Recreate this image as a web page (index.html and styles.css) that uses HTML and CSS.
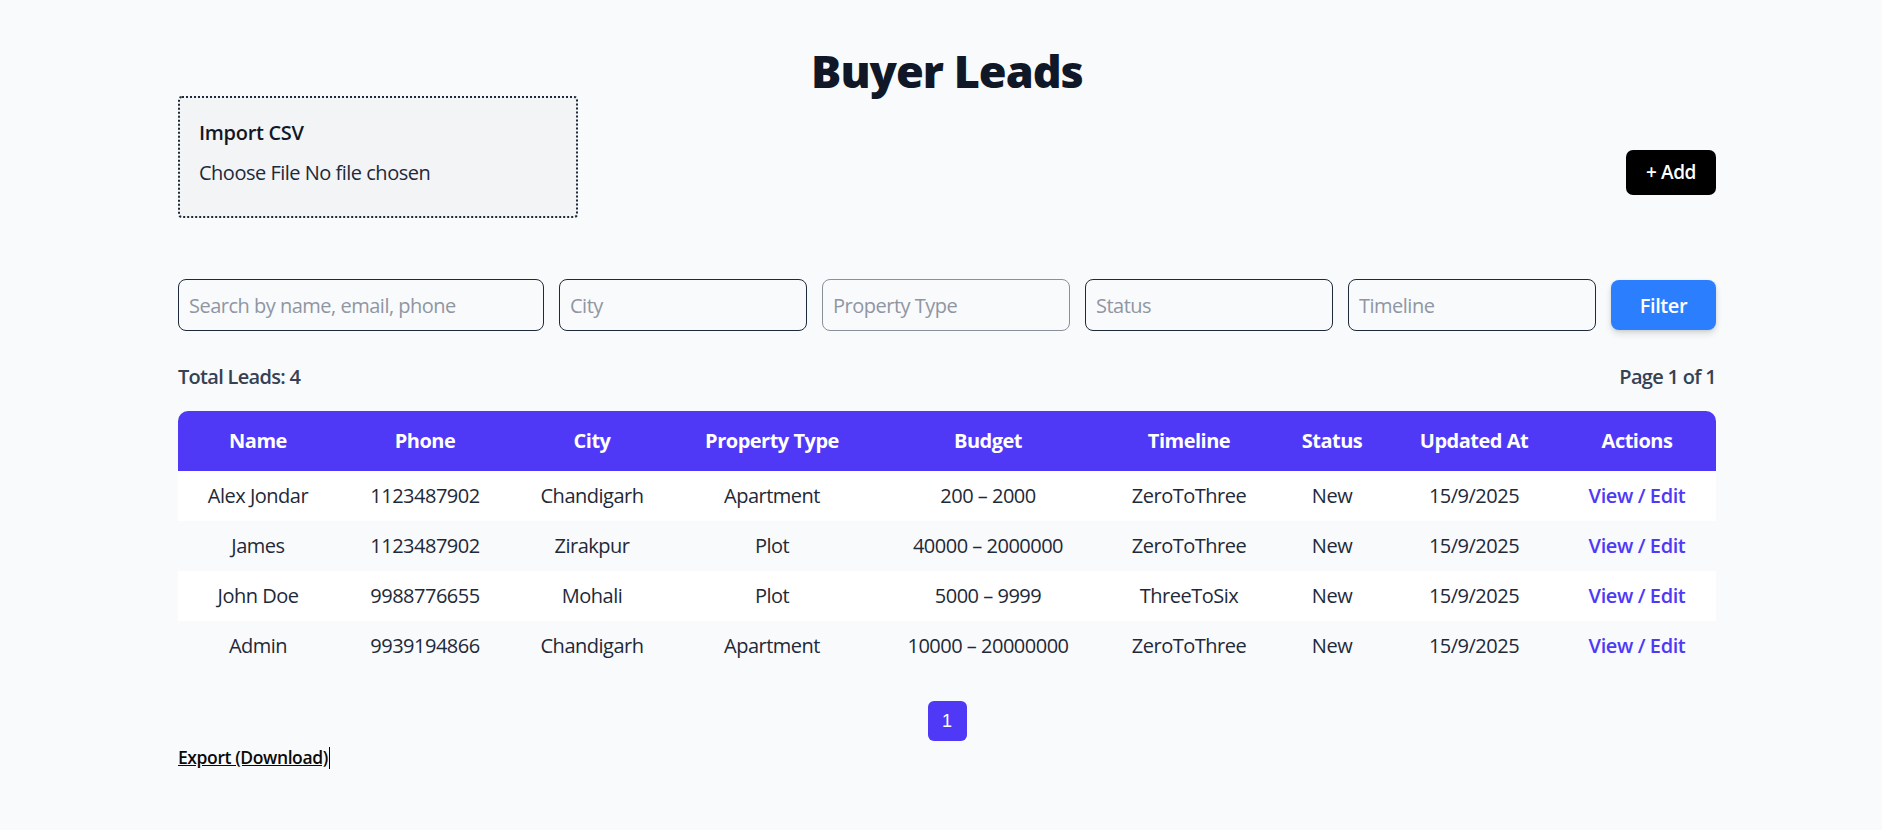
FILE: index.html
```html
<!DOCTYPE html>
<html lang="en">
<head>
<meta charset="utf-8">
<title>Buyer Leads</title>
<link rel="stylesheet" href="styles.css">
</head>
<body>
<main class="page">
  <h1 class="title">Buyer Leads</h1>

  <div class="top-row">
    <section class="import-box">
      <h2 class="import-title">Import CSV</h2>
      <div class="file-input"><span class="file-btn">Choose File</span> <span class="file-name">No file chosen</span></div>
    </section>
    <button class="add-btn">+ Add</button>
  </div>

  <form class="filters">
    <input class="field field-search" type="text" placeholder="Search by name, email, phone">
    <input class="field" type="text" placeholder="City">
    <input class="field field-light" type="text" placeholder="Property Type">
    <input class="field" type="text" placeholder="Status">
    <input class="field" type="text" placeholder="Timeline">
    <button class="filter-btn" type="button">Filter</button>
  </form>

  <div class="stats">
    <span>Total Leads: 4</span>
    <span>Page 1 of 1</span>
  </div>

  <table class="leads">
    <colgroup>
      <col class="c-name"><col class="c-phone"><col class="c-city"><col class="c-type"><col class="c-budget"><col class="c-timeline"><col class="c-status"><col class="c-updated"><col class="c-actions">
    </colgroup>
    <thead>
      <tr>
        <th class="th-first">Name</th><th>Phone</th><th>City</th><th>Property Type</th><th>Budget</th><th>Timeline</th><th>Status</th><th>Updated At</th><th class="th-last">Actions</th>
      </tr>
    </thead>
    <tbody>
      <tr class="row-white">
        <td>Alex Jondar</td><td>1123487902</td><td>Chandigarh</td><td>Apartment</td><td>200 – 2000</td><td>ZeroToThree</td><td>New</td><td>15/9/2025</td><td><a class="action" href="#">View / Edit</a></td>
      </tr>
      <tr class="row-gray">
        <td>James</td><td>1123487902</td><td>Zirakpur</td><td>Plot</td><td>40000 – 2000000</td><td>ZeroToThree</td><td>New</td><td>15/9/2025</td><td><a class="action" href="#">View / Edit</a></td>
      </tr>
      <tr class="row-white">
        <td>John Doe</td><td>9988776655</td><td>Mohali</td><td>Plot</td><td>5000 – 9999</td><td>ThreeToSix</td><td>New</td><td>15/9/2025</td><td><a class="action" href="#">View / Edit</a></td>
      </tr>
      <tr class="row-gray">
        <td>Admin</td><td>9939194866</td><td>Chandigarh</td><td>Apartment</td><td>10000 – 20000000</td><td>ZeroToThree</td><td>New</td><td>15/9/2025</td><td><a class="action" href="#">View / Edit</a></td>
      </tr>
    </tbody>
  </table>

  <nav class="pager">
    <button class="page-btn">1</button>
  </nav>

  <div class="export-row">
    <a class="export" href="#">Export (Download)</a><span class="caret"></span>
  </div>
</main>
</body>
</html>
```

FILE: styles.css
```css
* { box-sizing: border-box; }

html, body {
  margin: 0;
  padding: 0;
  background: #f9fafb;
}

body {
  font-family: "Open Sans", "Noto Sans", sans-serif;
  font-size: 20px;
  line-height: 30px;
  color: #1e2939;
  letter-spacing: -0.5px;
}

.page {
  width: 1538px;
  margin-left: 178px;
  padding-top: 46px;
  padding-bottom: 40px;
}

.title {
  margin: 0;
  text-align: center;
  font-size: 45px;
  line-height: 50px;
  font-weight: 800;
  color: #101828;
  letter-spacing: -1px;
}

.top-row {
  display: flex;
  justify-content: space-between;
  align-items: center;
}

.import-box {
  width: 400px;
  margin-bottom: 30px;
  padding: 20px 20px 28px 19px;
  background: #f3f4f6;
  border: 2px dotted #1e2939;
  border-radius: 4px;
}

.import-title {
  margin: 0 0 10px 0;
  font-size: 20px;
  line-height: 30px;
  font-weight: 600;
  color: #101828;
  letter-spacing: -0.3px;
}

.file-input {
  font-size: 20px;
  line-height: 30px;
  color: #1e2939;
}

.add-btn {
  height: 45px;
  padding: 0 20px;
  border: none;
  border-radius: 7px;
  background: #000;
  color: #fff;
  font-family: inherit;
  font-size: 19px;
  font-weight: 600;
  letter-spacing: -0.4px;
  cursor: pointer;
}

.filters {
  display: flex;
  gap: 15px;
  margin: 31px 0 0 0;
  align-items: center;
}

.field {
  width: 248px;
  height: 52px;
  padding: 0 10px;
  border: 1px solid #1e2939;
  border-radius: 8px;
  background: #f9fafb;
  font-family: inherit;
  font-size: 20px;
  letter-spacing: -0.5px;
  color: #1e2939;
  outline: none;
}

.field::placeholder { color: #8f96a3; }

.field-search { flex: 1; }

.field-light { border-color: #8a909a; }

.filter-btn {
  width: 105px;
  height: 50px;
  border: none;
  border-radius: 8px;
  background: #2b7fff;
  color: #fff;
  font-family: inherit;
  font-size: 20px;
  font-weight: 600;
  letter-spacing: -0.4px;
  box-shadow: 0 4px 7px rgba(0, 0, 0, 0.12), 0 1px 3px rgba(0, 0, 0, 0.1);
  cursor: pointer;
}

.stats {
  display: flex;
  justify-content: space-between;
  margin-top: 31px;
  font-weight: 600;
  color: #364153;
  letter-spacing: -0.7px;
}

.leads {
  width: 100%;
  margin-top: 19px;
  border-collapse: separate;
  border-spacing: 0;
  table-layout: fixed;
}

.c-name { width: 160px; }
.c-phone { width: 174px; }
.c-city { width: 160px; }
.c-type { width: 200px; }
.c-budget { width: 232px; }
.c-timeline { width: 170px; }
.c-status { width: 116px; }
.c-updated { width: 168px; }
.c-actions { width: 158px; }

.leads th {
  padding: 15px 0;
  background: #4f39f6;
  color: #fff;
  font-weight: 700;
  text-align: center;
  line-height: 30px;
  letter-spacing: -0.5px;
}

.leads .th-first { border-top-left-radius: 10px; }
.leads .th-last { border-top-right-radius: 10px; }

.leads td {
  padding: 10px 0;
  text-align: center;
  line-height: 30px;
  white-space: nowrap;
}

.row-white td { background: #ffffff; }
.row-gray td { background: #f9fafb; }

.action {
  color: #4f39f6;
  font-weight: 600;
  text-decoration: none;
  letter-spacing: -0.4px;
}

.pager {
  display: flex;
  justify-content: center;
  margin-top: 30px;
}

.page-btn {
  width: 39px;
  height: 40px;
  padding: 0;
  border: none;
  border-radius: 6px;
  background: #4f39f6;
  color: #fff;
  font-family: "Liberation Sans", Arial, sans-serif;
  font-size: 18px;
  letter-spacing: 0;
}

.export-row {
  display: flex;
  align-items: center;
  margin-top: 4px;
  height: 25px;
}

.export {
  font-size: 17.5px;
  line-height: 25px;
  font-weight: 600;
  color: #0a0a0a;
  text-decoration: underline;
  letter-spacing: -0.4px;
}

.caret {
  display: inline-block;
  width: 1px;
  height: 22px;
  background: #000;
  margin-left: 1px;
}
```
